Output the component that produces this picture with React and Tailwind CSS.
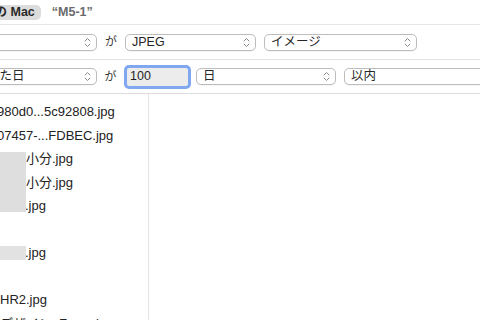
import React from 'react';

const FONT = { fontFamily: '"Liberation Sans", "Noto Sans CJK JP", sans-serif' };

function UpDown() {
  return (
    <svg width="7" height="11" viewBox="0 0 7 11" className="shrink-0">
      <path d="M1 4 L3.5 1.5 L6 4" fill="none" stroke="#8a8a8a" strokeWidth="1" strokeLinecap="round" strokeLinejoin="round" />
      <path d="M1 7 L3.5 9.5 L6 7" fill="none" stroke="#8a8a8a" strokeWidth="1" strokeLinecap="round" strokeLinejoin="round" />
    </svg>
  );
}

// pop-up button, mac style
function Popup({ label, className }) {
  return (
    <div className={`h-[17px] shrink-0 flex items-center justify-between pl-[6px] pr-[5px] bg-white border border-[#bdbdbd] rounded-[5px] text-[12.5px] text-[#262626] shadow-[0_0.5px_0.5px_rgba(0,0,0,0.08)] ${className}`}>
      <span className="whitespace-nowrap leading-none">{label}</span>
      <UpDown />
    </div>
  );
}

const files = [
  { name: '980d0...5c92808.jpg', indent: '-ml-[3px]' },
  { name: '07457-...FDBEC.jpg', indent: '-ml-[3px]' },
  { name: '小分.jpg', indent: 'ml-[26px]' },
  { name: '小分.jpg', indent: 'ml-[26px]' },
  { name: '.jpg', indent: 'ml-[25px]' },
  { name: '', indent: '' },
  { name: '.jpg', indent: 'ml-[25px]' },
  { name: '', indent: '' },
  { name: 'HR2.jpg', indent: 'ml-0' },
  { name: 'デザイン_Zoom.jpg', indent: 'ml-0' },
];

export default function App() {
  return (
    <div className="w-[480px] h-[320px] overflow-hidden bg-white flex flex-col" style={FONT}>
      {/* scope bar */}
      <div className="h-[25px] shrink-0 flex items-center gap-[11px] border-b border-[#e6e6e6]">
        <div className="h-[15px] shrink-0 -ml-[24px] pl-[6px] pr-[6px] flex items-center rounded-[5px] bg-[#dcdcdc] text-[12.5px] font-bold text-[#2a2a2a] whitespace-nowrap">
          この Mac
        </div>
        <div className="text-[12.5px] font-bold text-[#6b6b6b] whitespace-nowrap">“M5-1”</div>
      </div>

      {/* rule 1 */}
      <div className="h-[35px] shrink-0 flex items-center border-b border-[#e3e3e3]">
        <Popup label="種類" className="-ml-[60px] w-[157px] text-transparent" />
        <span className="w-[28px] shrink-0 text-center text-[12px] text-[#333]">が</span>
        <Popup label="JPEG" className="w-[131px]" />
        <div className="w-[8px] shrink-0" />
        <Popup label="イメージ" className="w-[153px]" />
      </div>

      {/* rule 2 */}
      <div className="h-[34px] shrink-0 flex items-center border-b border-[#dcdcdc]">
        <Popup label="最後に開いた日" className="-ml-[70px] w-[167px]" />
        <span className="w-[27px] shrink-0 text-center text-[12px] text-[#333]">が</span>
        <div className="w-[67px] h-[24px] shrink-0 rounded-[5px] border-[3px] border-[#7fa8f0] bg-[#ececec] flex items-center pl-[3px] text-[12.5px] text-[#1f1f1f]">
          100
        </div>
        <div className="w-[5px] shrink-0" />
        <Popup label="日" className="w-[140px]" />
        <div className="w-[8px] shrink-0" />
        <Popup label="以内" className="w-[150px]" />
      </div>

      {/* results */}
      <div className="flex-1 flex min-h-0">
        <div className="w-[149px] shrink-0 border-r border-[#e4e4e4] pt-[6px] overflow-hidden">
          {files.map((f, i) => (
            <div key={i} className="h-[23.5px] flex items-center">
              <span className={`${f.indent} text-[13px] text-[#222] whitespace-nowrap`}>{f.name}</span>
            </div>
          ))}
        </div>
        <div className="flex-1 bg-white" />
      </div>

      {/* blurred name parts */}
      <div className="fixed left-0 top-[152px] w-[26px] h-[60px] bg-[#dedede]" />
      <div className="fixed left-0 top-[246px] w-[26px] h-[14px] bg-[#e2e2e2]" />
    </div>
  );
}
